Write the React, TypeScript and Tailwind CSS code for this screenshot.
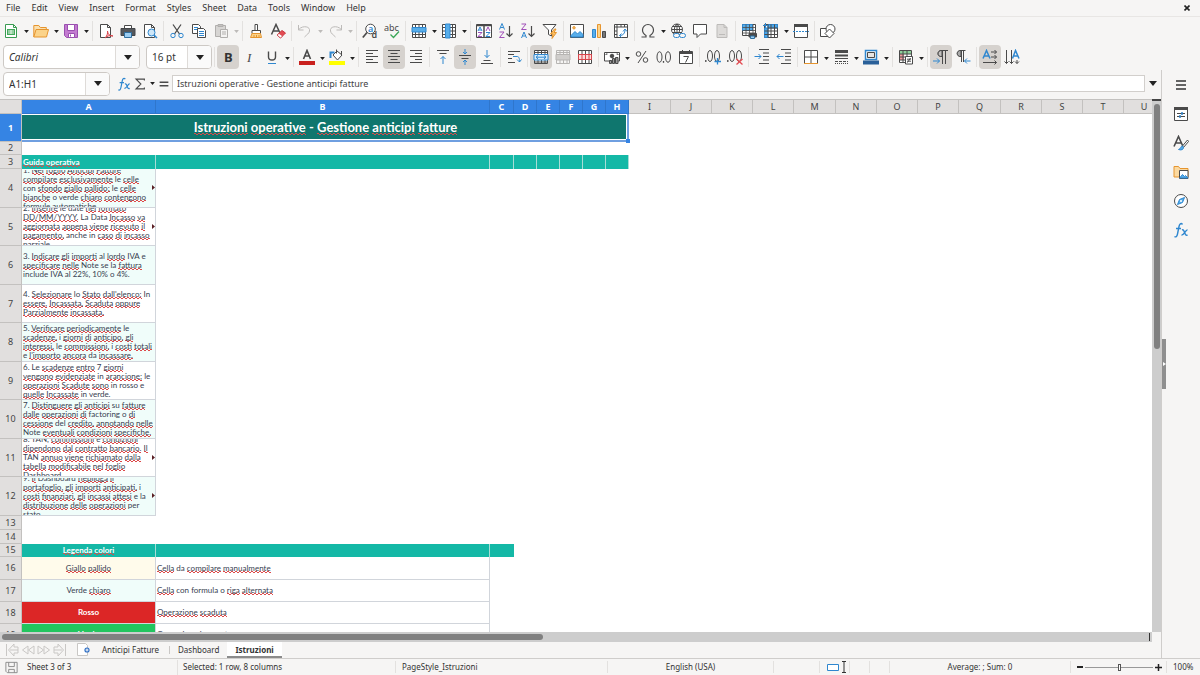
import { Fragment } from "react";
import type { ReactNode } from "react";
import clsx from "clsx";

const INK = "#4a4a4a";
const BLUE = "#2f87cf";

/* ---------- icons, all on a 16px grid ---------- */

function Svg({ children, size = 16 }: { children: ReactNode; size?: number }) {
  return (
    <svg width={size} height={size} viewBox="0 0 16 16" fill="none" stroke={INK} strokeWidth="1" aria-hidden="true" className="shrink-0">
      {children}
    </svg>
  );
}

const icons: Record<string, ReactNode> = {
  new: (
    <>
      <path d="M2.5 1.5h8l3 3v10h-11z" fill="#fff" stroke="#3a9b52" />
      <path d="M10.5 1.5v3h3" stroke="#3a9b52" />
      <path d="M4 6h8v6H4z" fill="#43a95b" stroke="none" />
      <path d="M5 8h6M5 10h6M8 7v4" stroke="#e8f7ea" />
    </>
  ),
  open: (
    <>
      <path d="M.8 14V2.5h5l1.5 2h6V7" fill="#fbe0ae" stroke="#e6952f" />
      <path d="M.8 14 3 6.5h12.5L13.5 14z" fill="#fbd38a" stroke="#e6952f" />
    </>
  ),
  save: (
    <>
      <path d="M1.5 1.5h13v13h-11l-2-2z" fill="#c37bd0" stroke="#9a4fb0" />
      <path d="M4.5 1.5h7v6h-7zM5.5 10.5h6v4h-6z" fill="#fff" stroke="#9a4fb0" />
      <path d="M7.5 11.5v2" stroke="#9a4fb0" />
    </>
  ),
  pdf: (
    <>
      <path d="M2.5 1.5h7l3 3v10h-10z" fill="#fff" />
      <path d="M9.5 1.5v3h3" />
      <path d="M7 15c2-2 3-5 2.5-7 0 3 2 5 5.500 5-3-1-6 0-8 2z" fill="#f7c8c8" stroke="#d9434a" />
    </>
  ),
  print: (
    <>
      <path d="M4.5 5V2.5h7V5" fill="#fff" />
      <path d="M1 5.5h14v7H1z" fill="#55585c" stroke="#44474a" />
      <path d="M4.5 9.5h7v5h-7z" fill="#9bcdf2" stroke="#2f6f9f" />
    </>
  ),
  preview: (
    <>
      <path d="M2.5 1.5h7l3 3v10h-10z" fill="#fff" />
      <path d="M9.5 1.5v3h3" />
      <circle cx="9.5" cy="9.5" r="3.5" fill="#cfe7f8" stroke={BLUE} />
      <path d="m12 12 3 3" stroke={BLUE} strokeWidth="1.5" />
    </>
  ),
  cut: (
    <>
      <path d="M4 1.5 10.5 11M12 1.5 5.5 11" strokeWidth="1.3" />
      <circle cx="4" cy="12.5" r="2.2" stroke={BLUE} />
      <circle cx="12" cy="12.5" r="2.2" stroke={BLUE} />
    </>
  ),
  copy: (
    <>
      <path d="M1.5 1.5h6l2 2v7h-8z" fill="#fff" />
      <path d="M3 4.5h4M3 6.5h4" stroke={BLUE} />
      <path d="M6.5 5.5h6l2 2v7h-8z" fill="#fff" />
      <path d="M8 8.5h5M8 10.5h5M8 12.5h5" stroke={BLUE} />
    </>
  ),
  paste: (
    <>
      <path d="M2.5 2.5h10v11h-10z" fill="#d7d5d3" stroke="#b1afad" />
      <path d="M5 1.5h5v2H5z" fill="#c4c2c0" stroke="#b1afad" />
      <path d="M7.5 6.5h7v8h-7z" fill="#f4f3f2" stroke="#b1afad" />
      <path d="M9 9h4M9 11h4" stroke="#b1afad" />
    </>
  ),
  clone: (
    <>
      <path d="M7 1.5h2.500v6H7z" fill="#fff" />
      <path d="M4 7.5h8.500v3H4z" fill="#fff" />
      <path d="M4 10.5h8.500l1 4H2.500z" fill="#fbd38a" stroke="#e6952f" />
      <path d="M6 12v2M8.5 12v2M11 12v2" stroke="#e6952f" />
    </>
  ),
  clear: (
    <>
      <path d="M1.5 11.5 6 1.500 10 10M3 8h5.500" strokeWidth="1.5" />
      <path d="m7 12 5-4.500 3.500 2.500-5 5z" fill="#e44b52" stroke="#c9363e" />
      <path d="m7 12 2-1.500 3.500 2.500-2 2z" fill="#fff" stroke="#c9363e" strokeWidth=".6" />
    </>
  ),
  undo: <path d="M1.5 2v5h5M1.5 7C4 2.5 13.5 2.5 12.5 8c-.4 2.5-2.500 3.500-5 6" stroke="#bdbbb9" />,
  redo: <path d="M14.5 2v5h-5M14.5 7C12 2.5 2.5 2.5 3.5 8c.4 2.5 2.500 3.500 5 6" stroke="#bdbbb9" />,
  find: (
    <>
      <circle cx="8.5" cy="6" r="4.8" fill="#fff" />
      <path d="M5 9.5.8 14.5" strokeWidth="1.7" />
      <text x="6" y="9" fontSize="9" fill={BLUE} stroke="none" fontFamily="Noto Sans" fontWeight="600">a</text>
      <text x="9.5" y="15" fontSize="9" fill={INK} stroke="none" fontFamily="Noto Sans" fontWeight="600">d</text>
    </>
  ),
  spell: (
    <>
      <text x="0" y="7.5" fontSize="9" fill={INK} stroke="none" fontFamily="Noto Sans">abc</text>
      <path d="m6.5 11.5 3 3L15 8.5" stroke="#3aa757" strokeWidth="1.3" />
    </>
  ),
  row: (
    <>
      <path d="M1.5 1.5h13v13h-13z" fill="#fff" />
      <path d="M1.5 11.5h13M4.5 1.5v13M8 1.5v13M11.5 1.5v13M1.5 4.5h13" />
      <path d="M1 4.5h14v4.500H1z" fill="#58aeea" stroke={BLUE} />
    </>
  ),
  col: (
    <>
      <path d="M1.5 1.5h13v13h-13z" fill="#fff" />
      <path d="M1.5 4.5h13M1.5 8h13M1.5 11.5h13M11.5 1.5v13" />
      <path d="M4.5 1h4.500v14H4.500z" fill="#58aeea" stroke={BLUE} />
    </>
  ),
  sort: (
    <>
      <path d="M.5 1.5h15v13H.5z" fill="#fff" />
      <path d="M.5 2.5h15M8 2v12" strokeWidth="1.5" />
      <path d="m2 8 2-4 2 4M2.6 7h2.800M10 9.500h4l-4 4h4" stroke={BLUE} />
      <path d="M2 9.500h4l-4 4h4M10 8l2-4 2 4" stroke="#a04fb8" />
    </>
  ),
  asc: (
    <>
      <path d="m1.5 6.500 2.500-6 2.500 6M2.500 4.500h3" stroke={BLUE} />
      <path d="M1.5 9h4.500l-4.500 5.500h5" stroke="#a04fb8" />
      <path d="M11.5 3v10.500m-3-3 3 3 3-3" strokeWidth="1.2" />
    </>
  ),
  desc: (
    <>
      <path d="M1.5 1h4.500L1.500 6.500h5" stroke="#a04fb8" />
      <path d="m1.5 15 2.500-6 2.500 6M2.500 13h3" stroke={BLUE} />
      <path d="M11.5 3v10.500m-3-3 3 3 3-3" strokeWidth="1.2" />
    </>
  ),
  filter: (
    <>
      <path d="M1 1.5h13L9.500 7v6l-3-1.500V7z" fill="#fff" />
      <path d="m12.5 6-4 5h2.500l-1 4.500 4.500-6H12l2-3.500z" fill="#fbc36a" stroke="#e6952f" />
    </>
  ),
  image: (
    <>
      <path d="M1.5 1.5h13v13h-13z" fill="#fff" />
      <path d="m2 12.5 4-4 2.500 2.500L11 8.500l3 3V14H2z" fill="#58aeea" stroke={BLUE} />
      <circle cx="5" cy="4.8" r="1.2" fill="#fbc36a" stroke="#e6952f" />
    </>
  ),
  chart: (
    <>
      <path d="M1.5 6.500h3v8h-3z" fill="#58aeea" stroke={BLUE} />
      <path d="M6.5 1.5h3v13h-3z" fill="#fbd38a" stroke="#e6952f" />
      <path d="M11.5 8.500h3v6h-3z" fill="#777" />
    </>
  ),
  pivot: (
    <>
      <path d="M1.5 1.5h13v13h-13z" fill="#fff" />
      <path d="M1.5 4h13M4 1.5v13M8 1.5V4M11.5 1.5V4M1.5 8H4M1.5 11.5H4" />
      <path d="M6.5 12.500c4 0 5.500-2.500 5.500-6m-2 2 2-2.500 2 2.500M8.500 10.500l-2 2 2 2" stroke={BLUE} />
    </>
  ),
  omega: <path d="M1.5 14h4.500v-1.500C3.500 11 2.500 9.500 2.500 7c0-3 2.500-5.500 5.500-5.500S13.500 4 13.500 7c0 2.500-1 4-3.500 5.500V14h4.500" strokeWidth="1.2" />,
  link: (
    <>
      <circle cx="7" cy="6.5" r="5.5" fill="#fff" />
      <path d="M1.5 6.500h11M7 1v11M2.500 3.500h9M2.500 9.500h9M7 1C3.500 4 3.500 9 7 12M7 1c3.500 3 3.500 8 0 11" />
      <rect x="3.5" y="10.5" width="6" height="4" rx="2" fill="#f6f5f4" stroke={BLUE} />
      <rect x="9.5" y="10.5" width="6" height="4" rx="2" fill="#f6f5f4" stroke={BLUE} />
    </>
  ),
  comment: <path d="M1.5 1.5h13v9.500H8.500L5 14.500V11H1.500z" fill="#fff" />,
  page: (
    <>
      <path d="M3 1.500h7l3 3v10H3z" fill="#dddbd9" stroke="#bdbbb9" />
      <path d="M10 1.500v3h3M5 11.500h6" stroke="#bdbbb9" />
    </>
  ),
  printrange: (
    <>
      <path d="M1.5 1.5h13v11h-13z" fill="#fff" />
      <path d="M1.5 1.5h10v6h-10z" fill="#58aeea" stroke={BLUE} />
      <path d="M1.5 4.500h13M1.500 7.500h13M1.500 10h13M5 1.500v11M8.500 1.500v11M12 1.500v11" strokeWidth=".8" />
      <path d="M8 10.500h7.500V14H8z" fill="#4a4a4a" />
      <path d="M9.5 13h4v2.500h-4z" fill="#9bcdf2" stroke="#2f6f9f" />
    </>
  ),
  freeze: (
    <>
      <path d="M1.5 1.5h13v13h-13z" fill="#fff" />
      <path d="M5 1.5h9.500V5H5zM1.500 5H5v9.500H1.500z" fill="#4ba6e8" stroke={BLUE} />
      <path d="M8 1.5v13M11.5 1.5v13M5 5h9.500M1.500 8h13M1.500 11.500h13M5 1.500v13" />
      <path d="M2.5 0v5M0 2.500h5" stroke={BLUE} />
    </>
  ),
  split: (
    <>
      <path d="M1.5 1.5h13v13h-13z" fill="#fff" />
      <path d="M1 2.5h14" strokeWidth="3" />
      <path d="M0 8.5h16" stroke={BLUE} strokeDasharray="2 1" />
    </>
  ),
  shapes: (
    <>
      <path d="M.5 5.500h8v8h-8z" fill="#fff" />
      <circle cx="10.5" cy="6" r="4.5" fill="#fff" />
      <path d="m9.5 6 4.500 4.500L9.500 15 5 10.500z" fill="#fff" />
    </>
  ),
  bold: <text x="4" y="12.5" fontSize="13" fill="#333" stroke="none" fontFamily="Noto Sans" fontWeight="700">B</text>,
  italic: <text x="5" y="12.5" fontSize="13" fill={INK} stroke="none" fontFamily="Liberation Serif" fontStyle="italic">I</text>,
  underline: (
    <>
      <path d="M4.5 2.500v5.500c0 4 7 4 7 0V2.500" strokeWidth="1.4" />
      <path d="M4 14.500h8" stroke={BLUE} />
    </>
  ),
  fontcolor: (
    <>
      <path d="M4.5 10 8 1.500 11.500 10M5.500 7h5" strokeWidth="1.6" />
      <path d="M0 14h16" stroke="#c9211e" strokeWidth="4" />
    </>
  ),
  fill: (
    <>
      <path d="m4 6 4-4 5 4-4.500 5z" fill="#fff" />
      <path d="M7.5.5v4M12.500 6V2" />
      <path d="M1.5 9V3.500h4" stroke={BLUE} strokeWidth="2" />
      <path d="M0 14h16" stroke="#ffff00" strokeWidth="4" />
    </>
  ),
  left: <path d="M2 1.500h12M2 4.500h7M2 7.500h12M2 10.500h7M2 13.500h12" />,
  center: <path d="M2 1.500h12M4.500 4.500h7M2 7.500h12M4.500 10.500h7M2 13.500h12" />,
  right: <path d="M2 1.500h12M7 4.500h7M2 7.500h12M7 10.500h7M2 13.500h12" />,
  top: (
    <>
      <path d="M2 1.500h12M4.500 4.500h7" />
      <path d="M8 15V7.500m-2.500 2.500L8 7.500l2.500 2.500" stroke={BLUE} />
    </>
  ),
  middle: (
    <>
      <path d="M2 6.500h12M4.500 9.500h7" />
      <path d="M8 0v5M6 3l2 2 2-2M8 16v-5m-2 2 2-2 2 2" stroke={BLUE} />
    </>
  ),
  bottom: (
    <>
      <path d="M4.500 11.500h7M2 14.500h12" />
      <path d="M8 1v7.500M5.500 6 8 8.500 10.500 6" stroke={BLUE} />
    </>
  ),
  wrap: (
    <>
      <path d="M2 2.500h12M2 5.500h6M2 9.500h4M2 13.500h7" />
      <path d="M7 7.500h4c2 0 2.500 1.500 2.500 5.500m-2.500-2.500 2.500 2.500 2-2.500" stroke={BLUE} />
    </>
  ),
  merge: (
    <>
      <path d="M1.500 1.500h13v13h-13zM5 1.500v4M8.500 1.500v4M12 1.500v4M5 11v3.500M8.500 11v3.500M12 11v3.500M1.500 3.500h13M1.500 13h13" fill="#fff" />
      <path d="M1 5.500h14V11H1z" fill="#d9edfb" stroke={BLUE} />
      <path d="M3 8.200h10M5 6.500 3 8.200 5 10m6-3.500 2 1.700-2 1.800" stroke={BLUE} />
    </>
  ),
  mergeonly: (
    <>
      <path d="M1.500 1.500h13v13h-13zM5 1.500v4M8.500 1.500v4M12 1.500v4M5 11v3.500M8.500 11v3.500M12 11v3.500M1.500 3.500h13" stroke="#b7b5b3" />
      <path d="M1 5.500h14V11H1z" fill="#d0cecc" stroke="#b7b5b3" />
    </>
  ),
  unmerge: (
    <>
      <path d="M1.500 1.500h13v13h-13zM5 1.500v13M8.500 1.500v13M12 1.500v13" fill="#fff" />
      <path d="M1.500 5.500h13v5h-13zM5 5.500v5M8.500 5.500v5M12 5.500v5" fill="#fbdcdc" stroke="#d9434a" />
    </>
  ),
  currency: (
    <>
      <path d="M.5 3.500h15v8.500H.5z" fill="#fff" />
      <path d="M2 6V5h1.500M12.500 5H14v1" />
      <circle cx="8" cy="7" r="1.800" fill="#4a4a4a" />
      <path d="M5.500 11.500h2v3h-2zM8.500 9.500h2v5h-2zM11.500 8.500h2.500v6h-2.500z" fill="#999" />
    </>
  ),
  percent: (
    <>
      <circle cx="4.5" cy="5" r="2.3" />
      <circle cx="11.5" cy="11" r="2.3" />
      <path d="m12 2-8 12" />
    </>
  ),
  decimal: (
    <>
      <ellipse cx="3.5" cy="8" rx="2.5" ry="5.3" />
      <ellipse cx="12" cy="8" rx="2.5" ry="5.3" />
      <path d="M7.500 12v1.800" strokeWidth="1.3" />
    </>
  ),
  calendar: (
    <>
      <path d="M1.500 2.500h13v12h-13z" fill="#fff" />
      <path d="M1.500 4h13" strokeWidth="2" />
      <path d="M4.500 1v3M11.500 1v3M5.500 7.500h5l-3 6" />
    </>
  ),
  adddec: (
    <>
      <path d="M.8 11v2" strokeWidth="1.3" />
      <ellipse cx="5" cy="7" rx="2.5" ry="5.5" />
      <ellipse cx="12" cy="7" rx="2.5" ry="5.5" />
      <path d="M12.500 9v6.500M9.500 12.500H16" stroke={BLUE} strokeWidth="1.3" />
    </>
  ),
  deldec: (
    <>
      <path d="M.8 11v2" strokeWidth="1.3" />
      <ellipse cx="5" cy="7" rx="2.5" ry="5.5" />
      <ellipse cx="12" cy="7" rx="2.5" ry="5.5" />
      <path d="m9.500 10 6 5.500m0-5.500-6 5.500" stroke="#e44b52" strokeWidth="1.3" />
    </>
  ),
  indent: (
    <>
      <path d="M5 .500h10M9 4h6M9 7.500h6M9 11h6M5 14.500h10" />
      <path d="M.5 7.500H7M4.500 5 7 7.500 4.500 10" stroke={BLUE} />
    </>
  ),
  outdent: (
    <>
      <path d="M5 .500h10M9 4h6M9 7.500h6M9 11h6M5 14.500h10" />
      <path d="M1 7.500h6.500M3.500 5 1 7.500 3.500 10" stroke={BLUE} />
    </>
  ),
  borders: (
    <>
      <path d="M1.500 1.500h13v13h-13z" fill="#fff" />
      <path d="M8 1.500v13M1.500 8h13" />
      <path d="M1 14.500h14" stroke="#e6952f" />
    </>
  ),
  linestyle: (
    <>
      <path d="M2 2.500h13" strokeWidth="3" />
      <path d="M2 6.500h13" strokeWidth="2" />
      <path d="M2 9.500h13" />
      <path d="M2 12.500h13" strokeDasharray="3 1" />
      <path d="M2 14.500h13" strokeDasharray="1 1" />
    </>
  ),
  bordercolor: (
    <>
      <path d="M2.500 1.500h11v9h-11z" fill="#fff" stroke={BLUE} strokeWidth="1.5" />
      <path d="M4.500 3.500h7v5h-7z" fill="#e8e6e4" />
      <path d="M0 13.500h16" stroke="#2a6099" strokeWidth="4" />
    </>
  ),
  conditional: (
    <>
      <path d="M1.500 1.500h12v12h-12z" fill="#fff" />
      <path d="M2 2h11v3H2z" fill="#8ed19b" stroke="none" />
      <path d="M2 5h4v6H2z" fill="#f09a9d" stroke="none" />
      <path d="M1.500 5h12M1.500 8h12M1.500 11h12M5 1.500v12M9 1.500v12" />
      <path d="M7.500 7.500h7v7.500h-7z" fill="#fff" />
      <path d="M9 10.200h4M9 12.200h4M12.500 9l-3 4.500" />
    </>
  ),
  ltr: (
    <>
      <path d="M9.500 15V1.500M12.500 15V1.500M15 1.500H8c-4 0-4 6 0 6h1.500" />
      <path d="M9 1.500C4 1 3.500 8 9 7.500z" fill="#c2c0be" />
      <path d="M0 12h6.500M4 9.500 6.500 12 4 14.500" stroke={BLUE} />
    </>
  ),
  rtl: (
    <>
      <path d="M6.500 13V1.500M8.500 13V1.500M10.500 1.500H6c-5 0-5 6 0 6" />
      <path d="M6 1.500C1 1 1 8 6 7.500z" fill="#aaa" />
      <path d="M15.500 12H9.500m2.500-2.500L9.500 12l2.500 2.500" stroke={BLUE} />
    </>
  ),
  horizontal: (
    <>
      <path d="M1 9.500 4.500 1.500 8 9.500M2.500 7h4" stroke={BLUE} strokeWidth="1.5" />
      <path d="M9 3h5.500M12.500 1l2 2-2 2M9 8h5.500m-2-2 2 2-2 2M1 13.500h13.500m-2-2 2 2-2 2" />
    </>
  ),
  vertical: (
    <>
      <path d="M8.500 9.500 11.500 1.500 15 9.500M10 7h4" stroke={BLUE} strokeWidth="1.5" />
      <path d="M2.500 1v13.500m-2-2 2 2 2-2M7.500 1v13.500m-2-2 2 2 2-2M13 11v3.500m-2-2 2 2 2-2" />
    </>
  ),
  fx: (
    <>
      <path d="M9.500 2.500C8 .5 6.500 2 6 4.500L4.500 12c-.5 2.500-1.500 3.500-3 2.500M3 6.500h5" stroke={BLUE} strokeWidth="1.4" />
      <path d="M9 8c3-1.500 2 6.500 5.500 5M14.500 8c-2-.5-3.500 5.500-6 5" stroke={BLUE} strokeWidth="1.4" />
    </>
  ),
  sigma: <path d="M13 4V2.500H3.500L9 8l-5.500 5.500H13V12" strokeWidth="1.3" />,
  equals: <path d="M3 6h10M3 10h10" strokeWidth="1.7" />,
  hamburger: <path d="M3 4h10M3 8h10M3 12h10" stroke="#333" strokeWidth="1.6" />,
  properties: (
    <>
      <path d="M1.500 1.500h13v13h-13z" fill="#fff" />
      <path d="M1 2.500h14" strokeWidth="3" />
      <path d="M4 7.500h8M4 10.500h8" />
      <path d="M9 6v3M7 9v3" stroke={BLUE} strokeWidth="1.5" />
    </>
  ),
  styles: (
    <>
      <path d="M1 11.500 5.500 1.500 10 11.500M2.500 8h6" strokeWidth="1.6" />
      <path d="m14.500 5-5 6 1 1.500 5-6z" fill="#fff" />
      <path d="M9.500 11c-2 0-1.500 3-4 3.500 3 1 5 0 5-2z" fill="#58aeea" stroke={BLUE} />
    </>
  ),
  gallery: (
    <>
      <path d="M1 13V2.500h4.500l1.500 2h8V13z" fill="#fbd9a0" stroke="#e6952f" />
      <path d="M6.500 6.500h8.500v8H6.500z" fill="#fff" />
      <path d="m7 13.500 2.500-3 2 2 1-1L15 14H7z" fill="#58aeea" stroke={BLUE} />
    </>
  ),
  navigator: (
    <>
      <circle cx="8" cy="8" r="6.5" fill="#fff" />
      <path d="m11.500 4.500-2 5-5 2 2-5z" fill="#58aeea" stroke={BLUE} />
      <circle cx="8" cy="8" r="1" fill="#fff" stroke="none" />
    </>
  ),
  saveState: <path d="M2 2.500h12v11H3.500L2 12zM5 2.500V7h6V2.500M5 13.500V10h6v3.500" stroke="#8b8b8b" />,
  addsheet: (
    <>
      <path d="M1.500 1.500h8l2 2v10h-10z" fill="#fff" stroke="#c9c7c5" />
      <circle cx="11" cy="8" r="2.6" fill="#2f6fc4" stroke="none" />
      <path d="M11 6.500v3M9.500 8h3" stroke="#fff" />
    </>
  ),
  first: <path d="M2.500 2v12M14 8H6M10 2 4.500 8l5.500 6v-3h4V5h-4z" stroke="#c9c7c5" />,
  prev: <path d="M8 4v8L2.500 8zM14 4v8L8.500 8z" stroke="#c9c7c5" />,
  next: <path d="M2 4v8l5.500-4zM8 4v8l5.500-4z" stroke="#c9c7c5" />,
  last: <path d="M13.500 2v12M2 8h8M6 2l5.500 6L6 14v-3H2V5h4z" stroke="#c9c7c5" />,
};

/* "|" is a separator, a trailing "+" adds a drop-down arrow, "*" marks a pressed button, "-" a disabled one */
const standardBar = "new+ open+ save+ | pdf print preview | cut copy paste-+ | clone clear | undo-+ redo-+ | find spell | row+ col+ | sort asc desc filter | image chart pivot | omega+ link comment page- | printrange freeze+ split | shapes";
const formatBar = "| bold* italic underline+ | fontcolor+ fill+ | left center* right | top middle* bottom | wrap | merge* mergeonly- unmerge | currency+ percent decimal calendar | adddec deldec | indent outdent | borders+ linestyle+ bordercolor+ | conditional+ | ltr* rtl | horizontal* vertical";

function Caret({ dim = false, wide = false }: { dim?: boolean; wide?: boolean }) {
  return (
    <svg width={wide ? 8 : 5} height={wide ? 5 : 3} viewBox="0 0 8 5" className="shrink-0" aria-hidden="true">
      <path d="M0 0h8L4 5z" fill={dim ? "#bdbbb9" : "#222"} />
    </svg>
  );
}

function Tools({ spec }: { spec: string }) {
  return (
    <>
      {spec.split(" ").map((item, i) => {
        if (item === "|") return <span key={i} className="mx-0.5 h-5 w-px shrink-0 bg-[#e3e1df]" />;
        const name = item.replace(/[+*-]/g, "");
        const disabled = item.includes("-");
        return (
          <Fragment key={i}>
            <button
              type="button"
              aria-label={name}
              disabled={disabled}
              className={clsx("flex h-6 w-[22px] shrink-0 items-center justify-center rounded", item.includes("*") && "bg-[#d6d2ce]")}
            >
              <Svg>{icons[name]}</Svg>
            </button>
            {item.includes("+") && (
              <button type="button" aria-label={`${name} options`} disabled={disabled} className="flex h-6 w-2 shrink-0 items-center justify-center pt-0.5">
                <Caret dim={disabled} />
              </button>
            )}
          </Fragment>
        );
      })}
    </>
  );
}

function Combo({ label, value, className, italic }: { label: string; value: string; className: string; italic?: boolean }) {
  return (
    <div className={clsx("flex h-6 shrink-0 overflow-hidden rounded border border-[#cdc9c5] bg-white", className)}>
      <input aria-label={label} defaultValue={value} className={clsx("min-w-0 flex-1 px-[5px] text-[10px] text-[#333] outline-none", italic && "italic")} />
      <button type="button" aria-label={`${label} list`} className="flex w-6 items-center justify-center border-l border-[#dedbd8] bg-[#fafafa]">
        <Caret wide />
      </button>
    </div>
  );
}

/* ---------- sheet ---------- */

const columns = [
  ["A", 134], ["B", 334], ["C", 24], ["D", 23], ["E", 23], ["F", 23], ["G", 23], ["H", 23],
  ["I", 42], ["J", 41], ["K", 41], ["L", 41], ["M", 42], ["N", 41], ["O", 41], ["P", 41],
  ["Q", 42], ["R", 41], ["S", 41], ["T", 41], ["U", 41],
] as const;

const guide = [
  ["1. Nel foglio Anticipi Fatture", "compilare esclusivamente le celle", "con sfondo giallo pallido; le celle", "bianche o verde chiaro contengono", "formule automatiche."],
  ["2. Inserire le date nel formato", "DD/MM/YYYY. La Data Incasso va", "aggiornata appena viene ricevuto il", "pagamento, anche in caso di incasso", "parziale."],
  ["3. Indicare gli importi al lordo IVA e", "specificare nelle Note se la fattura", "include IVA al 22%, 10% o 4%."],
  ["4. Selezionare lo Stato dall'elenco: In", "essere, Incassata, Scaduta oppure", "Parzialmente incassata."],
  ["5. Verificare periodicamente le", "scadenze, i giorni di anticipo, gli", "interessi, le commissioni, i costi totali", "e l'importo ancora da incassare."],
  ["6. Le scadenze entro 7 giorni", "vengono evidenziate in arancione; le", "operazioni Scadute sono in rosso e", "quelle Incassate in verde."],
  ["7. Distinguere gli anticipi su fatture", "dalle operazioni di factoring o di", "cessione del credito, annotando nelle", "Note eventuali condizioni specifiche."],
  ["8. TAN, commissioni e condizioni", "dipendono dal contratto bancario. Il", "TAN annuo viene richiamato dalla", "tabella modificabile nel foglio", "Dashboard."],
  ["9. Il Dashboard riepiloga il", "portafoglio, gli importi anticipati, i", "costi finanziari, gli incassi attesi e la", "distribuzione delle operazioni per", "stato."],
];

const legend = [
  { name: "Giallo pallido", text: "Cella da compilare manualmente", fill: "bg-[#fffbeb]" },
  { name: "Verde chiaro", text: "Cella con formula o riga alternata", fill: "bg-[#f0fdfa]" },
  { name: "Rosso", text: "Operazione scaduta", fill: "bg-[#dc2626] font-bold text-white" },
  { name: "Verde", text: "Operazione incassata", fill: "bg-[#22c55e] font-bold text-white" },
];

const known = new Set(["le", "con", "o", "e", "la", "data", "note", "in", "include", "iva", "al", "i", "lo", "date", "anche", "factoring", "da", "del", "tan", "dashboard", "formula", "per", "verde", "rosso", "-", "su", "se"]);

function Spelled({ text }: { text: string }) {
  return (
    <>
      {text.split(" ").map((word, i) => {
        const bare = word.toLowerCase().replace(/[.,;:]/g, "");
        const ok = known.has(bare) || /^[\d%]+$/.test(bare);
        return (
          <Fragment key={i}>
            {i > 0 && " "}
            {ok ? word : (
              <span className="[background-image:repeating-linear-gradient(90deg,#dc4a4a_0_2px,transparent_2px_4px),repeating-linear-gradient(90deg,transparent_0_2px,#dc4a4a_2px_4px)] [background-position:0_calc(100%_-_1px),0_100%] [background-size:100%_1px] bg-no-repeat">
                {word}
              </span>
            )}
          </Fragment>
        );
      })}
    </>
  );
}

function RowHead({ n, selected }: { n: number; selected?: boolean }) {
  return (
    <th scope="row" className={clsx("border-r border-b border-[#c3c1bf] p-0 text-center align-middle font-['Noto_Sans',sans-serif] text-[9px] leading-3", selected ? "bg-[#3584e4] font-bold text-white" : "bg-[#e1dfde] font-normal text-[#444]")}>
      {n}
    </th>
  );
}

function Sheet() {
  return (
    <table className="w-max table-fixed border-separate border-spacing-0 font-[Lato,sans-serif] text-[8px] leading-[9px] text-[#374151]">
      <colgroup>
        <col style={{ width: 22 }} />
        {columns.map(([name, width]) => <col key={name} style={{ width }} />)}
      </colgroup>
      <thead>
        <tr className="h-3.5">
          <th className="border-r border-b border-[#c3c1bf] bg-[#e1dfde] p-0" />
          {columns.map(([name], i) => (
            <th key={name} scope="col" className={clsx("border-r border-b p-0 text-center font-['Noto_Sans',sans-serif] text-[9px] leading-3", i < 8 ? "border-[#2f76cc] bg-[#3584e4] font-bold text-white" : "border-[#c3c1bf] bg-[#e1dfde] font-normal text-[#444]")}>
              {name}
            </th>
          ))}
        </tr>
      </thead>
      <tbody>
        <tr className="h-7">
          <RowHead n={1} selected />
          <td colSpan={8} className="relative bg-[#0f766e] p-0 pb-0.5 text-center align-middle text-[13px] leading-4 font-bold text-white">
            <Spelled text="Istruzioni operative - Gestione anticipi fatture" />
            <span className="absolute inset-0 border-r-2 border-b-2 border-[#6f9fe0]" />
            <span className="absolute inset-x-0 top-0 right-0.5 bottom-0.5 border-t border-r border-b border-white" />
            <span className="absolute -right-px -bottom-px size-1 bg-[#3584e4]" />
          </td>
        </tr>
        <tr className="h-[13px]"><RowHead n={2} /></tr>
        <tr className="h-3.5">
          <RowHead n={3} />
          <td className="border-r border-[#a8ddd6] bg-[#14b8a6] p-0 pl-px align-middle font-bold text-white"><Spelled text="Guida operativa" /></td>
          {columns.slice(1, 8).map(([name]) => <td key={name} className="border-r border-[#a8ddd6] bg-[#14b8a6] p-0" />)}
        </tr>
        {guide.map((lines, i) => (
          <tr key={i} className={i % 2 ? "h-[38px]" : "h-[39px]"}>
            <RowHead n={i + 4} />
            <td className={clsx("relative border-r border-b border-[#d1d5db] p-0", i % 2 === 0 && "bg-[#f0fdfa]")}>
              <div className="flex h-[37px] flex-col justify-center overflow-hidden pl-px">
                {lines.map((line) => <div key={line} className="shrink-0 whitespace-nowrap"><Spelled text={line} /></div>)}
              </div>
              {lines.length > 4 && (
                <svg width="3" height="5" viewBox="0 0 3 5" className="absolute top-4 right-0" aria-hidden="true"><path d="M0 0v5l3-2.500z" fill="#5b1f24" /></svg>
              )}
            </td>
          </tr>
        ))}
        <tr className="h-3.5"><RowHead n={13} /></tr>
        <tr className="h-3.5"><RowHead n={14} /></tr>
        <tr className="h-[13px]">
          <RowHead n={15} />
          <td className="border-r border-[#a8ddd6] bg-[#14b8a6] p-0 text-center font-bold text-white"><Spelled text="Legenda colori" /></td>
          <td className="border-r border-[#a8ddd6] bg-[#14b8a6] p-0" />
          <td className="bg-[#14b8a6] p-0" />
        </tr>
        {legend.map(({ name, text, fill }, i) => (
          <tr key={name} className={i === 0 ? "h-[23px]" : "h-[22px]"}>
            <RowHead n={i + 16} />
            <td className={clsx("border-r border-b border-[#d1d5db] p-0 text-center align-middle", fill)}><Spelled text={name} /></td>
            <td className="border-r border-b border-[#d1d5db] p-0 pl-px align-middle"><Spelled text={text} /></td>
          </tr>
        ))}
      </tbody>
    </table>
  );
}

export default function App() {
  return (
    <div className="flex h-screen flex-col overflow-hidden bg-[#f6f5f4] font-['Noto_Sans',sans-serif] text-[9px] leading-3 text-[#333]">
      <nav className="flex h-[17px] shrink-0 items-center gap-[11px] border-b border-[#e8e6e4] px-1.5">
        {["File", "Edit", "View", "Insert", "Format", "Styles", "Sheet", "Data", "Tools", "Window", "Help"].map((m) => (
          <button key={m} type="button">{m}</button>
        ))}
        <button type="button" aria-label="Close document" className="ml-auto p-1">
          <svg width="6" height="6" viewBox="0 0 6 6" aria-hidden="true"><path d="m.5.5 5 5m0-5-5 5" stroke="#222" strokeWidth="1.6" /></svg>
        </button>
      </nav>
      <div className="flex h-[27px] shrink-0 items-center"><Tools spec={standardBar} /></div>
      <div className="flex h-[26px] shrink-0 items-center pl-[3px]">
        <Combo label="Font name" value="Calibri" className="w-[137px]" italic />
        <Combo label="Font size" value="16 pt" className="ml-1.5 w-[66px]" />
        <Tools spec={formatBar} />
      </div>

      <div className="flex min-h-0 flex-1">
        <main className="flex min-w-0 flex-1 flex-col">
          <div className="flex h-[29px] shrink-0 items-center pb-0.5 pl-[3px]">
            <Combo label="Name box" value="A1:H1" className="w-[107px]" />
            <button type="button" aria-label="Function wizard" className="ml-1.5 flex w-4 justify-center"><Svg size={14}>{icons.fx}</Svg></button>
            <button type="button" aria-label="Select function" className="flex w-4 justify-center"><Svg size={14}>{icons.sigma}</Svg></button>
            <button type="button" aria-label="Function list" className="flex w-2 justify-center"><Caret /></button>
            <button type="button" aria-label="Formula" className="flex w-4 justify-center"><Svg size={14}>{icons.equals}</Svg></button>
            <input aria-label="Input line" defaultValue="Istruzioni operative - Gestione anticipi fatture" className="h-[17px] min-w-0 flex-1 border border-[#d2cfcc] bg-white px-1 text-[9px] text-[#444] outline-none" />
            <button type="button" aria-label="Expand formula bar" className="flex w-4 justify-center"><Caret wide /></button>
          </div>
          <div className="flex min-h-0 flex-1">
            <div className="min-w-0 flex-1 overflow-hidden border-t border-[#c3c1bf] bg-white"><Sheet /></div>
            <div className="flex w-[9px] shrink-0 flex-col items-center bg-[#cdcdcd]">
              <span className="mb-[3px] h-0.5 w-full bg-[#444]" />
              <span className="h-[46%] w-1.5 rounded-full bg-[#808080]" />
            </div>
          </div>
          <div className="mr-[9px] flex h-2.5 shrink-0 items-center justify-between bg-[#cdcdcd] pl-0.5">
            <span className="h-1.5 w-[47%] rounded-full bg-[#808080]" />
            <span className="mr-0.5 h-2 w-px bg-[#333]" />
          </div>
          <div className="flex h-4 shrink-0 items-center text-[8px]">
            <div className="flex pl-1">
              {["first", "prev", "next", "last"].map((n) => (
                <button key={n} type="button" aria-label={`${n} sheet`}><Svg>{icons[n]}</Svg></button>
              ))}
            </div>
            <button type="button" aria-label="Add sheet" className="ml-2"><Svg>{icons.addsheet}</Svg></button>
            <div role="tablist" className="flex h-full items-stretch">
              <button type="button" role="tab" aria-selected="false" className="px-2.5">Anticipi Fatture</button>
              <span className="my-1 w-px bg-[#c9c7c5]" />
              <button type="button" role="tab" aria-selected="false" className="px-2">Dashboard</button>
              <button type="button" role="tab" aria-selected="true" className="border-b-2 border-[#8b8b8b] bg-white px-2 pt-0.5 font-bold">Istruzioni</button>
            </div>
          </div>
        </main>
        <aside className="relative flex w-[39px] shrink-0 flex-col items-center gap-[13px] border-l border-[#cfcdcb] pt-[7px]">
          {["hamburger", "properties", "styles", "gallery", "navigator", "fx"].map((n) => (
            <button key={n} type="button" aria-label={n}><Svg>{icons[n]}</Svg></button>
          ))}
          <button type="button" aria-label="Hide sidebar" className="absolute top-[269px] left-0 flex h-[50px] w-1 items-center justify-center bg-[#8f8f8f]">
            <svg width="3" height="4" viewBox="0 0 3 4" aria-hidden="true"><path d="M0 0v4l3-2z" fill="#fff" /></svg>
          </button>
        </aside>
      </div>

      <footer className="flex h-[17px] shrink-0 items-center divide-x divide-[#e3e1df] border-t border-[#cfcdcb] text-[8px]">
        <div className="flex w-[178px] items-center gap-2 pl-1"><Svg size={15}>{icons.saveState}</Svg>Sheet 3 of 3</div>
        <div className="w-[218px] pl-[5px]">Selected: 1 row, 8 columns</div>
        <div className="w-[212px] pl-1.5">PageStyle_Istruzioni</div>
        <div className="flex-1 text-center">English (USA)</div>
        <div className="h-3 w-[46px]" />
        <div className="flex w-[30px] items-center justify-center gap-1 pl-1">
          <svg width="22" height="12" viewBox="0 0 22 12" fill="none" aria-hidden="true">
            <path d="M1.500 3.500h11v6h-11z" fill="#fff" stroke={BLUE} />
            <path d="M18 1v10M16 .500h4M16 11.500h4" stroke="#333" />
          </svg>
        </div>
        <div className="h-3 w-5" />
        <div className="h-3 w-5" />
        <div className="w-[181px] text-center">Average: ; Sum: 0</div>
        <div className="flex w-[96px] items-center gap-0.5 pl-1.5">
          <button type="button" aria-label="Zoom out" className="h-0.5 w-1.5 bg-[#222]" />
          <input
            type="range"
            aria-label="Zoom"
            defaultValue={50}
            className="h-3 min-w-0 flex-1 appearance-none bg-transparent [&::-webkit-slider-runnable-track]:h-px [&::-webkit-slider-runnable-track]:bg-[#999] [&::-webkit-slider-thumb]:-mt-[3px] [&::-webkit-slider-thumb]:h-[7px] [&::-webkit-slider-thumb]:w-[3px] [&::-webkit-slider-thumb]:appearance-none [&::-webkit-slider-thumb]:border [&::-webkit-slider-thumb]:border-[#555] [&::-webkit-slider-thumb]:bg-white"
          />
          <button type="button" aria-label="Zoom in" className="mr-1">
            <svg width="7" height="7" viewBox="0 0 7 7" aria-hidden="true"><path d="M3.500 0v7M0 3.500h7" stroke="#222" strokeWidth="1.5" /></svg>
          </button>
        </div>
        <div className="w-[33px] pl-1.5">100%</div>
      </footer>
    </div>
  );
}
